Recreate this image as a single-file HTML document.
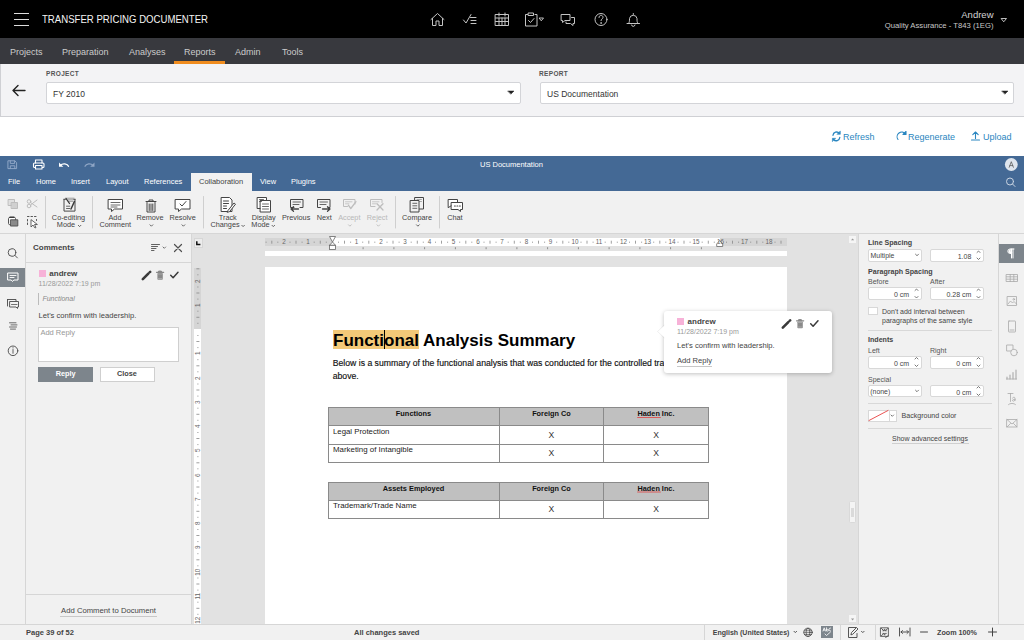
<!DOCTYPE html>
<html><head><meta charset="utf-8">
<style>
*{box-sizing:border-box;margin:0;padding:0}
html,body{width:1024px;height:640px;overflow:hidden;background:#fff;font-family:"Liberation Sans",sans-serif}
.a{position:absolute}
.t{position:absolute;white-space:nowrap;line-height:1}
svg{position:absolute;overflow:visible;z-index:5}
</style></head><body>
<!-- HEADER -->
<div class="a" style="left:0;top:0;width:1024px;height:38px;background:#000"></div>
<div class="a" style="left:14px;top:12.5px;width:15px;height:1px;background:#ddd"></div>
<div class="a" style="left:14px;top:18.5px;width:15px;height:1px;background:#ddd"></div>
<div class="a" style="left:14px;top:24.5px;width:15px;height:1px;background:#ddd"></div>
<div class="t" style="left:42px;top:14.4px;font-size:10.5px;color:#f4f4f4;transform:scaleX(0.915);transform-origin:0 0">TRANSFER PRICING DOCUMENTER</div>
<div class="t" style="right:30.5px;top:10.3px;font-size:9.5px;color:#d4d4d4">Andrew</div>
<div class="t" style="right:30.5px;top:21.8px;font-size:7.7px;color:#c8c8c8">Quality Assurance - T843 (1EG)</div>


<svg style="left:0;top:0" width="1024" height="640" viewBox="0 0 1024 640" fill="none" stroke-linecap="round" stroke-linejoin="round">
 <g stroke="#c4c4c4" stroke-width="1">
  <!-- home -->
  <path d="M431 19.5l6.5-6 6.5 6M432.5 18.5v7h3.5v-4.5h3v4.5h3.5v-7"/>
  <!-- checklist -->
  <path d="M463.5 20l2.5 3 5-8.5M470.5 17.5h5.5M471 20.5h5M471 23.5h5"/>
  <!-- calendar -->
  <rect x="495.5" y="14.5" width="13" height="11" /><path d="M495.5 18h13M499 13v3M505 13v3M499 18v7.5M502 18v7.5M505 18v7.5M495.5 21.5h13"/>
  <!-- clipboard -->
  <path d="M527.5 14.5h-2v11.5h11.5v-11.5h-2"/><rect x="528.5" y="13" width="5" height="2.5"/><path d="M528.5 20.5l2 2 3.5-4"/>
  <!-- chat -->
  <path d="M561.5 14.5h8.5v6h-5l-2.5 2v-2h-1z"/><path d="M571.5 17.5h3v6h-1.5v2l-2.5-2h-4.5v-1.5"/>
  <!-- help -->
  <circle cx="601" cy="19.5" r="6"/><path d="M599 17.5c0-1.3 1-2.2 2-2.2s2 .8 2 2c0 1.5-2 1.7-2 3.3"/><circle cx="601" cy="23" r=".3" fill="#d0d0d0"/>
  <!-- bell -->
  <path d="M627 23.5h12.5M628.5 23.5c1-1 1-2.5 1-5a3.8 3.8 0 0 1 7.5 0c0 2.5 0 4 1 5M631.5 25a1.8 1.8 0 0 0 3.5 0M633.3 13.5v1"/>
 </g>
 <path d="M539.5 18h4l-2 2.5z" stroke="#d0d0d0" stroke-width="0.9"/>
 <path d="M1001.5 18.5h5l-2.5 3z" stroke="#d0d0d0" stroke-width="0.9"/>
 <!-- back arrow -->
 <path d="M13 90.5h12M18 85.5l-5 5 5 5" stroke="#222" stroke-width="1.4"/>
 <!-- dropdown carets -->
 <path d="M508 91h6l-3 3z" fill="#222" stroke="#222" stroke-width=".5"/>
 <path d="M1002 91h6l-3 3z" fill="#222" stroke="#222" stroke-width=".5"/>
 <!-- refresh -->
 <g stroke="#2a86c0" stroke-width="1.1">
  <path d="M833 135.3a3.6 3.6 0 0 1 6.3-2M839.8 137.5a3.6 3.6 0 0 1-6.3 2" stroke-width="1.3"/><path d="M840.3 131.3v3h-3z M832.4 141.3v-3h3z" fill="#2a86c0" stroke-width="0.6"/>
  <path d="M898 139.5a4.3 4.3 0 0 1 7.5-5.5"/><path d="M906 131.5v3h-3z" fill="#2a86c0"/>
  <path d="M975.5 132v6.5M972.8 134.7l2.7-2.7 2.7 2.7M971.5 140h8"/>
 </g>
 <!-- title bar icons -->
 <g stroke="#8fa6c6" stroke-width="1">
  <path d="M8.3 160.8h6.5l1.8 1.8v6h-8.3z"/><path d="M10.3 160.8v2.6h4.3v-2.6M10.3 168.6v-2.8h4.5v2.8"/>
  <path d="M93 165.3a4.5 3.5 0 0 0-8 1" stroke-width="1.2"/><path d="M94.5 162.5v4.3h-4.3z" fill="#8fa6c6" stroke="none"/>
 </g>
 <g stroke="#fff" stroke-width="1.1">
  <path d="M35.5 163v-3h6.5v3"/><rect x="33.5" y="163" width="10.5" height="4.5" rx="1"/><path d="M35.5 165.5v3.5h6.5v-3.5z" fill="#446995"/>
  <path d="M60.5 165.3a4.5 3.5 0 0 1 8 1" stroke-width="1.3"/><path d="M59 162.5v4.3h4.3z" fill="#fff" stroke="none"/>
 </g>
 <circle cx="1011.3" cy="164.5" r="6.4" fill="#dfe5ed"/>
 <path d="M1009.2 167.3l2.1-5.6 2.1 5.6M1009.9 165.6h2.8" stroke="#555" stroke-width="0.75"/>
 <g stroke="#c9d4e2" stroke-width="1"><circle cx="1010" cy="181.5" r="3.5"/><path d="M1012.5 184l2.5 2.5"/></g>
</svg>

<!-- NAV -->
<div class="a" style="left:0;top:38px;width:1024px;height:26px;background:#38393e"></div>
<div class="t" style="left:10px;top:47.5px;font-size:9px;color:#ccc">Projects</div>
<div class="t" style="left:62px;top:47.5px;font-size:9px;color:#ccc">Preparation</div>
<div class="t" style="left:129px;top:47.5px;font-size:9px;color:#ccc">Analyses</div>
<div class="t" style="left:184px;top:47.5px;font-size:9px;color:#ccc">Reports</div>
<div class="t" style="left:235px;top:47.5px;font-size:9px;color:#ccc">Admin</div>
<div class="t" style="left:282px;top:47.5px;font-size:9px;color:#ccc">Tools</div>
<div class="a" style="left:174px;top:61px;width:51px;height:3px;background:#f08c1e"></div>

<!-- PROJECT PANEL -->
<div class="a" style="left:0;top:64px;width:1024px;height:53px;background:#f3f3f5;border-bottom:1px solid #cfd0d4;border-left:1px solid #cfd0d4"></div>
<div class="t" style="left:46px;top:70.5px;font-size:6.5px;font-weight:bold;color:#555;letter-spacing:0.35px">PROJECT</div>
<div class="a" style="left:46px;top:82px;width:475px;height:22px;background:#fff;border:1px solid #d3d4d8;border-radius:2px"></div>
<div class="t" style="left:53px;top:90px;font-size:8.5px;color:#333">FY 2010</div>
<div class="t" style="left:539px;top:70.5px;font-size:6.5px;font-weight:bold;color:#555;letter-spacing:0.35px">REPORT</div>
<div class="a" style="left:540px;top:82px;width:474px;height:22px;background:#fff;border:1px solid #d3d4d8;border-radius:2px"></div>
<div class="t" style="left:547px;top:90px;font-size:8.5px;color:#333">US Documentation</div>

<!-- ACTIONS -->
<div class="t" style="left:843px;top:132.5px;font-size:9px;color:#2a86c0">Refresh</div>
<div class="t" style="left:908px;top:132.5px;font-size:9px;color:#2a86c0">Regenerate</div>
<div class="t" style="left:983px;top:132.5px;font-size:9px;color:#2a86c0">Upload</div>

<!-- EDITOR TITLE BAR -->
<div class="a" style="left:0;top:155.5px;width:1024px;height:35.5px;background:#446995"></div>
<div class="t" style="left:480px;top:160.8px;font-size:7.5px;color:#fff">US Documentation</div>
<div class="t" style="left:8px;top:178px;font-size:7.5px;color:#fff">File</div>
<div class="t" style="left:36px;top:178px;font-size:7.5px;color:#fff">Home</div>
<div class="t" style="left:71px;top:178px;font-size:7.5px;color:#fff">Insert</div>
<div class="t" style="left:106px;top:178px;font-size:7.5px;color:#fff">Layout</div>
<div class="t" style="left:144px;top:178px;font-size:7.5px;color:#fff">References</div>
<div class="a" style="left:191px;top:173px;width:61px;height:18px;background:#f1f1f1"></div>
<div class="t" style="left:199px;top:178px;font-size:7.5px;color:#444">Collaboration</div>
<div class="t" style="left:260px;top:178px;font-size:7.5px;color:#fff">View</div>
<div class="t" style="left:291px;top:178px;font-size:7.5px;color:#fff">Plugins</div>

<!-- TOOLBAR -->
<div class="a" style="left:0;top:191px;width:1024px;height:43px;background:#f1f1f1;border-bottom:1px solid #d6d6d6"></div>


<!-- TOOLBAR ICONS -->
<svg style="left:0;top:0" width="1024" height="640" viewBox="0 0 1024 640" fill="none" stroke-linecap="round" stroke-linejoin="round">
 <g stroke="#bdbdbd" stroke-width="1">
  <rect x="8.5" y="199.5" width="6" height="6" fill="#e0e0e0"/><rect x="11.5" y="202.5" width="6" height="6" fill="#d0d0d0"/>
  <circle cx="29" cy="206" r="1.8"/><circle cx="29" cy="201.5" r="1.8"/><path d="M30.5 205 L37 200 M30.5 202.5 L37 207"/>
 </g>
 <g stroke="#444" stroke-width="1">
  <rect x="8.5" y="217.5" width="7" height="7" rx="1" fill="#fff" stroke="#555"/><rect x="10.8" y="219.8" width="7" height="6.2" fill="#8a8a8a" stroke="#555"/><path d="M10 217.2h4" stroke="#333" stroke-width="1.3"/>
  <path d="M27.5 216.5h1.5M31 216.5h1.5M34.5 216.5h1.5M27.5 219.5v1.5M27.5 223v1.5M36.5 219.5v1" stroke-width="0.9"/>
  <path d="M31 220 L31 227 L33 225 L35 228 L36 227.5 L34.5 224.5 L37 224.5 Z" fill="#fff" stroke-width="0.8"/>
 </g>
 <g stroke="#cfcfcf"><path d="M45.5 196.5V228M92.5 196.5V228M203.5 196.5V228M395.5 196.5V228M439.5 196.5V228"/></g>
 <g stroke="#444" stroke-width="1">
  <!-- co-editing -->
  <path d="M64 199.3v11.8h11v-11.8M64 199.3h1.5M73.5 199.3h1.5" stroke="#4a4a4a"/>
  <path d="M67.5 198.2h6.5M68.3 199.8h5M69 201.3h3.8" stroke="#9a9a9a" stroke-width="1"/>
  <path d="M66 198.3l3.5 5.2" stroke="#3a3a3a" stroke-width="1.3"/>
  <path d="M66.5 206.2h3.3M66.5 208.5h3.3" stroke="#555" stroke-width="0.9"/>
  <path d="M71 209l3.4-7.5" stroke="#3a3a3a" stroke-width="1.5"/>
  <!-- add comment -->
  <path d="M108.5 199.5h14v9.5h-8l-3 2.5v-2.5h-3z" fill="#fff"/><path d="M111 202.5h9M111 205h9M111 207h6" stroke-width="0.8"/>
  <!-- remove -->
  <path d="M146 201.5h10M149 201.5v-1.5h4v1.5M147 202.5v9.5h8v-9.5M149.2 204v6.5M151 204v6.5M152.8 204v6.5" />
  <!-- resolve -->
  <path d="M175.5 199.5h14.5v9.5h-8.5l-3 2.5v-2.5h-3z" fill="#fff"/><path d="M180 204l2 2 4-4.5" />
  <!-- track changes -->
  <path d="M221.5 197.5h8l2.5 2.5v11.5h-10.5z" fill="#fff"/><path d="M223.5 201h5M223.5 203.5h5M223.5 206h3M223.5 208.5h3"/>
  <path d="M228 210.5l6-7.5 1.5 1.2-6 7.5-2 .5z" fill="#fff"/>
  <!-- display mode -->
  <rect x="257.5" y="197.5" width="9" height="11" fill="#fff"/><rect x="260.5" y="200.5" width="10" height="11.5" fill="#fff"/>
  <path d="M262.5 204h6M262.5 206.5h6M262.5 209h6M259.5 199.5h4M259.5 201.5h2" stroke-width="0.8"/>
  <!-- previous -->
  <path d="M294 207.5h-3.5v-8h12.5v8h-3" /><path d="M293 202h7.5M293 204.5h6" stroke-width="0.8"/>
  <path d="M298.5 209h-7.5M293.5 206.8l-2.5 2.2 2.5 2.2" stroke-width="1.3"/>
  <!-- next -->
  <path d="M320.5 207.5h-3v-8h12.5v8h-2" /><path d="M320 202h7.5M320 204.5h6" stroke-width="0.8"/>
  <path d="M322.5 209h7.5M327.5 206.8l2.5 2.2-2.5 2.2" stroke-width="1.3"/>
  <!-- compare -->
  <rect x="415" y="197.5" width="8.5" height="11.5" fill="#f1f1f1"/><path d="M417 199.5h4.5M417 201.5h4.5" stroke-width="0.7" stroke="#888"/><rect x="410.5" y="200.5" width="8.5" height="11.5" fill="#f1f1f1"/>
  <path d="M412.8 203.3h4M412.8 205.8h4M412.8 208.3h4" stroke-width="0.8"/>
  <!-- chat -->
  <path d="M448.5 199.5h9v6h-6l-3 2z" fill="#fff"/><path d="M451.5 202.5h11v7h-2v2l-2.5-2h-6.5z" fill="#fff"/>
  <path d="M454.5 206h.8M457 206h.8M459.5 206h.8" stroke-width="1.2"/>
 </g>
 <g stroke="#bdbdbd" stroke-width="1">
  <!-- accept -->
  <path d="M347.5 206.5h-4v-7h11.5v4.5" /><path d="M345.5 201.8h6.5M345.5 203.8h3.5" stroke-width="0.8"/><path d="M348.3 205.2l2.5 3.3 5.2-6.8" stroke-width="1.3"/>
  <!-- reject -->
  <path d="M375 206.5h-4.5v-7h11.5v3" /><path d="M372.5 201.8h6.5M372.5 203.8h3.5" stroke-width="0.8"/><path d="M377 203.8l6 6.2M383 203.8l-6 6.2" stroke-width="1.3"/>
 </g>
 <g stroke="#555" stroke-width="0.9">
  <path d="M78.3 225.3l1.3 1.3 1.3-1.3M150 224.8l1.4 1.4 1.4-1.4M182 224.8l1.4 1.4 1.4-1.4M241.8 225.3l1.3 1.3 1.3-1.3M272 225.3l1.3 1.3 1.3-1.3M416.5 224.8l1.4 1.4 1.4-1.4"/>
 </g>
 <g stroke="#bbb" stroke-width="0.9"><path d="M348.5 224.8l1.4 1.4 1.4-1.4M377 224.8l1.4 1.4 1.4-1.4"/></g>
</svg>
<div class="t" style="left:28.5px;width:80px;text-align:center;top:214.12px;font-size:7.3px;color:#444">Co-editing</div>
<div class="t" style="left:26px;width:80px;text-align:center;top:220.62px;font-size:7.3px;color:#444">Mode</div>
<div class="t" style="left:75px;width:80px;text-align:center;top:214.12px;font-size:7.3px;color:#444">Add</div>
<div class="t" style="left:75.3px;width:80px;text-align:center;top:220.62px;font-size:7.3px;color:#444">Comment</div>
<div class="t" style="left:110px;width:80px;text-align:center;top:214.12px;font-size:7.3px;color:#444">Remove</div>
<div class="t" style="left:142.6px;width:80px;text-align:center;top:214.12px;font-size:7.3px;color:#444">Resolve</div>
<div class="t" style="left:187.8px;width:80px;text-align:center;top:214.12px;font-size:7.3px;color:#444">Track</div>
<div class="t" style="left:185px;width:80px;text-align:center;top:220.62px;font-size:7.3px;color:#444">Changes</div>
<div class="t" style="left:223.7px;width:80px;text-align:center;top:214.12px;font-size:7.3px;color:#444">Display</div>
<div class="t" style="left:220.5px;width:80px;text-align:center;top:220.62px;font-size:7.3px;color:#444">Mode</div>
<div class="t" style="left:256.1px;width:80px;text-align:center;top:214.12px;font-size:7.3px;color:#444">Previous</div>
<div class="t" style="left:284.3px;width:80px;text-align:center;top:214.12px;font-size:7.3px;color:#444">Next</div>
<div class="t" style="left:309.3px;width:80px;text-align:center;top:214.12px;font-size:7.3px;color:#b8b8b8">Accept</div>
<div class="t" style="left:337.2px;width:80px;text-align:center;top:214.12px;font-size:7.3px;color:#b8b8b8">Reject</div>
<div class="t" style="left:377.1px;width:80px;text-align:center;top:214.12px;font-size:7.3px;color:#444">Compare</div>
<div class="t" style="left:414.9px;width:80px;text-align:center;top:214.12px;font-size:7.3px;color:#444">Chat</div>

<!-- LEFT ICON COLUMN -->
<div class="a" style="left:0;top:234px;width:26px;height:390px;background:#f1f1f1;border-right:1px solid #d6d6d6"></div>
<div class="a" style="left:0;top:268px;width:25px;height:19px;background:#7d858c"></div>

<!-- COMMENTS PANEL -->
<div class="a" style="left:26px;top:234px;width:166px;height:390px;background:#f1f1f1;border-right:1px solid #d6d6d6"></div>
<div class="a" style="left:26px;top:262px;width:165px;height:1px;background:#d6d6d6"></div>
<div class="t" style="left:33px;top:244px;font-size:8px;font-weight:bold;color:#444">Comments</div>

<div class="a" style="left:38.5px;top:270px;width:7px;height:7px;background:#f7b2d8"></div>
<div class="t" style="left:49.3px;top:269.83px;font-size:8px;color:#444;font-weight:bold">andrew</div>
<div class="t" style="left:38.6px;top:279.87px;font-size:7px;color:#999;">11/28/2022 7:19 pm</div>
<div class="a" style="left:38px;top:293px;width:1px;height:12px;background:#bbb"></div>
<div class="t" style="left:42.4px;top:294.67px;font-size:7px;color:#888;font-style:italic">Functional</div>
<div class="t" style="left:38.6px;top:312.3px;font-size:7.6px;color:#444;">Let's confirm with leadership.</div>
<div class="a" style="left:38px;top:327px;width:140.5px;height:35px;background:#fff;border:1px solid #cfcfcf"></div>
<div class="t" style="left:40.4px;top:329.4px;font-size:7.5px;color:#999;">Add Reply</div>
<div class="a" style="left:38px;top:367px;width:55px;height:14.5px;background:#7d858c"></div>
<div class="t" style="left:-14.400000000000006px;width:160px;text-align:center;top:370px;font-size:7.3px;color:#fff;font-weight:bold">Reply</div>
<div class="a" style="left:99.5px;top:367px;width:55px;height:14.5px;background:#fff;border:1px solid #cfcfcf"></div>
<div class="t" style="left:47px;width:160px;text-align:center;top:370px;font-size:7.3px;color:#444;font-weight:bold">Close</div>
<div class="a" style="left:26px;top:594px;width:165px;height:1px;background:#d6d6d6"></div>
<div class="t" style="left:28.5px;width:160px;text-align:center;top:607px;font-size:7.7px;color:#444;">Add Comment to Document</div>
<div class="a" style="left:60px;top:616px;width:97px;height:0;border-top:1px solid #c8c8c8"></div>

<!-- DOC AREA -->
<div class="a" style="left:192px;top:234px;width:666px;height:390px;background:#e2e2e2"></div>
<div class="a" style="left:265px;top:267px;width:522px;height:357px;background:#fff"></div>

<div class="a" style="left:264.7px;top:250.9px;width:522.7px;height:5.1px;background:#fff"></div>
<div class="a" style="left:264.7px;top:238.4px;width:522.3px;height:8.1px;background:#d5d5d5"></div>
<div class="a" style="left:332px;top:238.4px;width:387.7px;height:8.1px;background:#fff"></div>
<div class="a" style="left:193.5px;top:238.3px;width:9.2px;height:9.3px;background:#ececec;border:1px solid #d6d6d6"></div>
<div class="a" style="left:194.4px;top:268px;width:7px;height:356px;background:#fff"></div>
<div class="a" style="left:194.4px;top:268px;width:7px;height:61.4px;background:#d5d5d5"></div>
<div class="a" style="left:332.5px;top:329.7px;width:86.25px;height:19.2px;background:#f3c978"></div>
<div class="t" style="left:333px;top:331.5px;font-size:17px;color:#000;font-weight:bold">Functional Analysis Summary</div>
<div class="a" style="left:383.5px;top:330px;width:1.2px;height:19px;background:#000"></div>
<div class="t" style="left:332.7px;top:359.4px;font-size:8.68px;color:#111;-webkit-text-stroke:0.15px #111">Below is a summary of the functional analysis that was conducted for the controlled transactions described</div>
<div class="t" style="left:332.7px;top:371.7px;font-size:8.68px;color:#111;-webkit-text-stroke:0.15px #111">above.</div>
<div class="a" style="left:327.8px;top:407.2px;width:380.8px;height:18.5px;background:#c0c0c0"></div>
<div class="a" style="left:327.8px;top:407.2px;width:381px;height:56.1px;border:1px solid #8a8a8a"></div>
<div class="a" style="left:499px;top:407.2px;width:1px;height:56.1px;background:#8a8a8a"></div>
<div class="a" style="left:603px;top:407.2px;width:1px;height:56.1px;background:#8a8a8a"></div>
<div class="a" style="left:327.8px;top:425.2px;width:381px;height:1px;background:#8a8a8a"></div>
<div class="a" style="left:327.8px;top:444.0px;width:381px;height:1px;background:#8a8a8a"></div>
<div class="a" style="left:327.8px;top:482px;width:380.8px;height:18.5px;background:#c0c0c0"></div>
<div class="a" style="left:327.8px;top:482px;width:381px;height:36.5px;border:1px solid #8a8a8a"></div>
<div class="a" style="left:499px;top:482px;width:1px;height:36.5px;background:#8a8a8a"></div>
<div class="a" style="left:603px;top:482px;width:1px;height:36.5px;background:#8a8a8a"></div>
<div class="a" style="left:327.8px;top:500.0px;width:381px;height:1px;background:#8a8a8a"></div>
<div class="t" style="left:333.5px;width:160px;text-align:center;top:409.64px;font-size:7.4px;color:#111;font-weight:bold">Functions</div>
<div class="t" style="left:471.4px;width:160px;text-align:center;top:409.72px;font-size:7.3px;color:#111;font-weight:bold">Foreign Co</div>
<div class="t" style="left:576.0px;width:160px;text-align:center;top:409.72px;font-size:7.3px;color:#111;font-weight:bold">Haden Inc.</div>
<div class="t" style="left:333.5px;width:160px;text-align:center;top:484.64px;font-size:7.4px;color:#111;font-weight:bold">Assets Employed</div>
<div class="t" style="left:471.4px;width:160px;text-align:center;top:484.72px;font-size:7.3px;color:#111;font-weight:bold">Foreign Co</div>
<div class="t" style="left:576.0px;width:160px;text-align:center;top:484.72px;font-size:7.3px;color:#111;font-weight:bold">Haden Inc.</div>
<svg style="left:0;top:0" width="1024" height="640" viewBox="0 0 1024 640" fill="none"><path d="M637.2 417.5h23.6M637.2 492h23.6" stroke="#e04040" stroke-width="0.8"/></svg>
<div class="t" style="left:333px;top:427.60px;font-size:7.8px;color:#222;">Legal Protection</div>
<div class="t" style="left:333px;top:446.01px;font-size:7.9px;color:#222;">Marketing of Intangible</div>
<div class="t" style="left:333px;top:502.31px;font-size:7.9px;color:#222;">Trademark/Trade Name</div>
<div class="t" style="left:531.4px;width:40px;text-align:center;top:430.58px;font-size:8.6px;color:#333;">X</div>
<div class="t" style="left:636.0px;width:40px;text-align:center;top:430.58px;font-size:8.6px;color:#333;">X</div>
<div class="t" style="left:531.4px;width:40px;text-align:center;top:448.98px;font-size:8.6px;color:#333;">X</div>
<div class="t" style="left:636.0px;width:40px;text-align:center;top:448.98px;font-size:8.6px;color:#333;">X</div>
<div class="t" style="left:531.4px;width:40px;text-align:center;top:505.18px;font-size:8.6px;color:#333;">X</div>
<div class="t" style="left:636.0px;width:40px;text-align:center;top:505.18px;font-size:8.6px;color:#333;">X</div>
<div class="a" style="left:849px;top:235.8px;width:7.3px;height:7px;background:#f5f5f5"></div>
<div class="a" style="left:849px;top:615.3px;width:7px;height:7.2px;background:#f5f5f5"></div><svg style="left:0;top:0" width="1024" height="640"><path d="M851 618.6h3.2l-1.6 1.8z M851 240.3h3.2l-1.6-1.8z" fill="#999"/></svg>
<div class="a" style="left:848.5px;top:501.3px;width:7.8px;height:21.5px;background:#f4f4f4;border:1px solid #d9d9d9;border-radius:1.5px"></div><div class="a" style="left:851.3px;top:508.1px;width:2.6px;height:8.8px;background:#dadada"></div>
<div class="a" style="left:664px;top:311px;width:168px;height:62px;background:#fff;border-radius:3px;box-shadow:0 1px 4px rgba(0,0,0,0.25)"></div>
<svg style="left:0;top:0" width="1024" height="640" viewBox="0 0 1024 640"><path d="M665 325 L657.5 331.5 L665 338 Z" fill="#fff"/><path d="M664.5 325 L657.5 331.5 L664.5 338" fill="none" stroke="rgba(0,0,0,0.08)" stroke-width="0.8"/></svg>
<div class="a" style="left:677px;top:317.6px;width:7px;height:7px;background:#f7b2d8;z-index:6"></div>
<div class="t" style="left:687.6px;top:317.73px;font-size:8px;color:#444;z-index:6;font-weight:bold">andrew</div>
<div class="t" style="left:677px;top:328.07px;font-size:7px;color:#999;z-index:6;">11/28/2022 7:19 pm</div>
<div class="t" style="left:677px;top:342.2px;font-size:7.6px;color:#444;z-index:6;">Let's confirm with leadership.</div>
<div class="t" style="left:677px;top:356.57px;font-size:7.6px;color:#444;z-index:6;">Add Reply</div>
<div class="a" style="left:676.5px;top:365.5px;width:35.5px;height:0;border-top:1px solid #c8c8c8;z-index:6"></div>

<svg style="left:0;top:0" width="1024" height="640" viewBox="0 0 1024 640" fill="none">
<path d="M271.8 240.7v3" stroke="#888" stroke-width="0.8"/>
<path d="M277.8 241.7v1" stroke="#888" stroke-width="0.9"/>
<path d="M290.0 241.7v1" stroke="#888" stroke-width="0.9"/>
<path d="M296.0 240.7v3" stroke="#888" stroke-width="0.8"/>
<path d="M302.1 241.7v1" stroke="#888" stroke-width="0.9"/>
<path d="M314.2 241.7v1" stroke="#888" stroke-width="0.9"/>
<path d="M320.3 240.7v3" stroke="#888" stroke-width="0.8"/>
<path d="M326.3 241.7v1" stroke="#888" stroke-width="0.9"/>
<path d="M338.5 241.7v1" stroke="#888" stroke-width="0.9"/>
<path d="M344.5 240.7v3" stroke="#888" stroke-width="0.8"/>
<path d="M350.6 241.7v1" stroke="#888" stroke-width="0.9"/>
<path d="M362.7 241.7v1" stroke="#888" stroke-width="0.9"/>
<path d="M368.8 240.7v3" stroke="#888" stroke-width="0.8"/>
<path d="M374.8 241.7v1" stroke="#888" stroke-width="0.9"/>
<path d="M387.0 241.7v1" stroke="#888" stroke-width="0.9"/>
<path d="M393.0 240.7v3" stroke="#888" stroke-width="0.8"/>
<path d="M399.1 241.7v1" stroke="#888" stroke-width="0.9"/>
<path d="M411.2 241.7v1" stroke="#888" stroke-width="0.9"/>
<path d="M417.3 240.7v3" stroke="#888" stroke-width="0.8"/>
<path d="M423.3 241.7v1" stroke="#888" stroke-width="0.9"/>
<path d="M435.5 241.7v1" stroke="#888" stroke-width="0.9"/>
<path d="M441.5 240.7v3" stroke="#888" stroke-width="0.8"/>
<path d="M447.6 241.7v1" stroke="#888" stroke-width="0.9"/>
<path d="M459.7 241.7v1" stroke="#888" stroke-width="0.9"/>
<path d="M465.8 240.7v3" stroke="#888" stroke-width="0.8"/>
<path d="M471.8 241.7v1" stroke="#888" stroke-width="0.9"/>
<path d="M484.0 241.7v1" stroke="#888" stroke-width="0.9"/>
<path d="M490.0 240.7v3" stroke="#888" stroke-width="0.8"/>
<path d="M496.1 241.7v1" stroke="#888" stroke-width="0.9"/>
<path d="M508.2 241.7v1" stroke="#888" stroke-width="0.9"/>
<path d="M514.3 240.7v3" stroke="#888" stroke-width="0.8"/>
<path d="M520.3 241.7v1" stroke="#888" stroke-width="0.9"/>
<path d="M532.5 241.7v1" stroke="#888" stroke-width="0.9"/>
<path d="M538.5 240.7v3" stroke="#888" stroke-width="0.8"/>
<path d="M544.6 241.7v1" stroke="#888" stroke-width="0.9"/>
<path d="M556.7 241.7v1" stroke="#888" stroke-width="0.9"/>
<path d="M562.8 240.7v3" stroke="#888" stroke-width="0.8"/>
<path d="M568.8 241.7v1" stroke="#888" stroke-width="0.9"/>
<path d="M581.0 241.7v1" stroke="#888" stroke-width="0.9"/>
<path d="M587.0 240.7v3" stroke="#888" stroke-width="0.8"/>
<path d="M593.1 241.7v1" stroke="#888" stroke-width="0.9"/>
<path d="M605.2 241.7v1" stroke="#888" stroke-width="0.9"/>
<path d="M611.3 240.7v3" stroke="#888" stroke-width="0.8"/>
<path d="M617.3 241.7v1" stroke="#888" stroke-width="0.9"/>
<path d="M629.5 241.7v1" stroke="#888" stroke-width="0.9"/>
<path d="M635.5 240.7v3" stroke="#888" stroke-width="0.8"/>
<path d="M641.6 241.7v1" stroke="#888" stroke-width="0.9"/>
<path d="M653.7 241.7v1" stroke="#888" stroke-width="0.9"/>
<path d="M659.8 240.7v3" stroke="#888" stroke-width="0.8"/>
<path d="M665.8 241.7v1" stroke="#888" stroke-width="0.9"/>
<path d="M678.0 241.7v1" stroke="#888" stroke-width="0.9"/>
<path d="M684.0 240.7v3" stroke="#888" stroke-width="0.8"/>
<path d="M690.1 241.7v1" stroke="#888" stroke-width="0.9"/>
<path d="M702.2 241.7v1" stroke="#888" stroke-width="0.9"/>
<path d="M708.3 240.7v3" stroke="#888" stroke-width="0.8"/>
<path d="M714.3 241.7v1" stroke="#888" stroke-width="0.9"/>
<path d="M726.5 241.7v1" stroke="#888" stroke-width="0.9"/>
<path d="M732.5 240.7v3" stroke="#888" stroke-width="0.8"/>
<path d="M738.6 241.7v1" stroke="#888" stroke-width="0.9"/>
<path d="M750.7 241.7v1" stroke="#888" stroke-width="0.9"/>
<path d="M756.8 240.7v3" stroke="#888" stroke-width="0.8"/>
<path d="M762.8 241.7v1" stroke="#888" stroke-width="0.9"/>
<path d="M775.0 241.7v1" stroke="#888" stroke-width="0.9"/>
<path d="M781.0 240.7v3" stroke="#888" stroke-width="0.8"/>
<path d="M363.1 247.2v2" stroke="#777" stroke-width="0.8"/>
<path d="M393.9 247.2v2" stroke="#777" stroke-width="0.8"/>
<path d="M424.6 247.2v2" stroke="#777" stroke-width="0.8"/>
<path d="M455.4 247.2v2" stroke="#777" stroke-width="0.8"/>
<path d="M486.1 247.2v2" stroke="#777" stroke-width="0.8"/>
<path d="M516.9 247.2v2" stroke="#777" stroke-width="0.8"/>
<path d="M547.6 247.2v2" stroke="#777" stroke-width="0.8"/>
<path d="M578.4 247.2v2" stroke="#777" stroke-width="0.8"/>
<path d="M609.1 247.2v2" stroke="#777" stroke-width="0.8"/>
<path d="M639.9 247.2v2" stroke="#777" stroke-width="0.8"/>
<path d="M670.6 247.2v2" stroke="#777" stroke-width="0.8"/>
<path d="M701.4 247.2v2" stroke="#777" stroke-width="0.8"/>
<path d="M329.5 236.5h6l-3 5.5z M332.5 242l3 3.3h-6z" fill="#fff" stroke="#666" stroke-width="0.8"/><rect x="329.5" y="245.3" width="6" height="4.2" fill="#fff" stroke="#666" stroke-width="0.8"/>
<path d="M719.7 240.5l3 3.5v2.5h-6v-2.5z" fill="#fff" stroke="#666" stroke-width="0.8"/>
<path d="M197.4 274.8h1" stroke="#888" stroke-width="0.9"/>
<path d="M197.4 287.0h1" stroke="#888" stroke-width="0.9"/>
<path d="M196.4 293.0h3" stroke="#888" stroke-width="0.8"/>
<path d="M197.4 299.1h1" stroke="#888" stroke-width="0.9"/>
<path d="M197.4 311.2h1" stroke="#888" stroke-width="0.9"/>
<path d="M196.4 317.3h3" stroke="#888" stroke-width="0.8"/>
<path d="M197.4 323.3h1" stroke="#888" stroke-width="0.9"/>
<path d="M197.4 335.5h1" stroke="#888" stroke-width="0.9"/>
<path d="M196.4 341.5h3" stroke="#888" stroke-width="0.8"/>
<path d="M197.4 347.6h1" stroke="#888" stroke-width="0.9"/>
<path d="M197.4 359.7h1" stroke="#888" stroke-width="0.9"/>
<path d="M196.4 365.8h3" stroke="#888" stroke-width="0.8"/>
<path d="M197.4 371.8h1" stroke="#888" stroke-width="0.9"/>
<path d="M197.4 384.0h1" stroke="#888" stroke-width="0.9"/>
<path d="M196.4 390.0h3" stroke="#888" stroke-width="0.8"/>
<path d="M197.4 396.1h1" stroke="#888" stroke-width="0.9"/>
<path d="M197.4 408.2h1" stroke="#888" stroke-width="0.9"/>
<path d="M196.4 414.3h3" stroke="#888" stroke-width="0.8"/>
<path d="M197.4 420.3h1" stroke="#888" stroke-width="0.9"/>
<path d="M197.4 432.5h1" stroke="#888" stroke-width="0.9"/>
<path d="M196.4 438.5h3" stroke="#888" stroke-width="0.8"/>
<path d="M197.4 444.6h1" stroke="#888" stroke-width="0.9"/>
<path d="M197.4 456.7h1" stroke="#888" stroke-width="0.9"/>
<path d="M196.4 462.8h3" stroke="#888" stroke-width="0.8"/>
<path d="M197.4 468.8h1" stroke="#888" stroke-width="0.9"/>
<path d="M197.4 481.0h1" stroke="#888" stroke-width="0.9"/>
<path d="M196.4 487.0h3" stroke="#888" stroke-width="0.8"/>
<path d="M197.4 493.1h1" stroke="#888" stroke-width="0.9"/>
<path d="M197.4 505.2h1" stroke="#888" stroke-width="0.9"/>
<path d="M196.4 511.3h3" stroke="#888" stroke-width="0.8"/>
<path d="M197.4 517.3h1" stroke="#888" stroke-width="0.9"/>
<path d="M197.4 529.5h1" stroke="#888" stroke-width="0.9"/>
<path d="M196.4 535.5h3" stroke="#888" stroke-width="0.8"/>
<path d="M197.4 541.6h1" stroke="#888" stroke-width="0.9"/>
<path d="M197.4 553.7h1" stroke="#888" stroke-width="0.9"/>
<path d="M196.4 559.8h3" stroke="#888" stroke-width="0.8"/>
<path d="M197.4 565.8h1" stroke="#888" stroke-width="0.9"/>
<path d="M197.4 578.0h1" stroke="#888" stroke-width="0.9"/>
<path d="M196.4 584.0h3" stroke="#888" stroke-width="0.8"/>
<path d="M197.4 590.1h1" stroke="#888" stroke-width="0.9"/>
<path d="M197.4 602.2h1" stroke="#888" stroke-width="0.9"/>
<path d="M196.4 608.3h3" stroke="#888" stroke-width="0.8"/>
<path d="M197.4 614.3h1" stroke="#888" stroke-width="0.9"/>
<path d="M196.8 241.2v3.4h3.6" stroke="#111" stroke-width="1.5" stroke-linecap="butt"/>
</svg>
<div class="t" style="left:273.9px;width:20px;text-align:center;top:238.6px;font-size:6.3px;color:#666;z-index:5">2</div>
<div class="t" style="left:298.1px;width:20px;text-align:center;top:238.6px;font-size:6.3px;color:#666;z-index:5">1</div>
<div class="t" style="left:346.6px;width:20px;text-align:center;top:238.6px;font-size:6.3px;color:#666;z-index:5">1</div>
<div class="t" style="left:370.9px;width:20px;text-align:center;top:238.6px;font-size:6.3px;color:#666;z-index:5">2</div>
<div class="t" style="left:395.1px;width:20px;text-align:center;top:238.6px;font-size:6.3px;color:#666;z-index:5">3</div>
<div class="t" style="left:419.4px;width:20px;text-align:center;top:238.6px;font-size:6.3px;color:#666;z-index:5">4</div>
<div class="t" style="left:443.6px;width:20px;text-align:center;top:238.6px;font-size:6.3px;color:#666;z-index:5">5</div>
<div class="t" style="left:467.9px;width:20px;text-align:center;top:238.6px;font-size:6.3px;color:#666;z-index:5">6</div>
<div class="t" style="left:492.1px;width:20px;text-align:center;top:238.6px;font-size:6.3px;color:#666;z-index:5">7</div>
<div class="t" style="left:516.4px;width:20px;text-align:center;top:238.6px;font-size:6.3px;color:#666;z-index:5">8</div>
<div class="t" style="left:540.6px;width:20px;text-align:center;top:238.6px;font-size:6.3px;color:#666;z-index:5">9</div>
<div class="t" style="left:564.9px;width:20px;text-align:center;top:238.6px;font-size:6.3px;color:#666;z-index:5">10</div>
<div class="t" style="left:589.1px;width:20px;text-align:center;top:238.6px;font-size:6.3px;color:#666;z-index:5">11</div>
<div class="t" style="left:613.4px;width:20px;text-align:center;top:238.6px;font-size:6.3px;color:#666;z-index:5">12</div>
<div class="t" style="left:637.6px;width:20px;text-align:center;top:238.6px;font-size:6.3px;color:#666;z-index:5">13</div>
<div class="t" style="left:661.9px;width:20px;text-align:center;top:238.6px;font-size:6.3px;color:#666;z-index:5">14</div>
<div class="t" style="left:686.1px;width:20px;text-align:center;top:238.6px;font-size:6.3px;color:#666;z-index:5">15</div>
<div class="t" style="left:710.4px;width:20px;text-align:center;top:238.6px;font-size:6.3px;color:#666;z-index:5">16</div>
<div class="t" style="left:734.6px;width:20px;text-align:center;top:238.6px;font-size:6.3px;color:#666;z-index:5">17</div>
<div class="t" style="left:758.9px;width:20px;text-align:center;top:238.6px;font-size:6.3px;color:#666;z-index:5">18</div>
<div class="t" style="left:187.9px;width:20px;text-align:center;top:277.7px;font-size:6.3px;color:#666;z-index:5;transform:rotate(-90deg)">2</div>
<div class="t" style="left:187.9px;width:20px;text-align:center;top:301.9px;font-size:6.3px;color:#666;z-index:5;transform:rotate(-90deg)">1</div>
<div class="t" style="left:187.9px;width:20px;text-align:center;top:350.4px;font-size:6.3px;color:#666;z-index:5;transform:rotate(-90deg)">1</div>
<div class="t" style="left:187.9px;width:20px;text-align:center;top:374.7px;font-size:6.3px;color:#666;z-index:5;transform:rotate(-90deg)">2</div>
<div class="t" style="left:187.9px;width:20px;text-align:center;top:398.9px;font-size:6.3px;color:#666;z-index:5;transform:rotate(-90deg)">3</div>
<div class="t" style="left:187.9px;width:20px;text-align:center;top:423.2px;font-size:6.3px;color:#666;z-index:5;transform:rotate(-90deg)">4</div>
<div class="t" style="left:187.9px;width:20px;text-align:center;top:447.4px;font-size:6.3px;color:#666;z-index:5;transform:rotate(-90deg)">5</div>
<div class="t" style="left:187.9px;width:20px;text-align:center;top:471.7px;font-size:6.3px;color:#666;z-index:5;transform:rotate(-90deg)">6</div>
<div class="t" style="left:187.9px;width:20px;text-align:center;top:495.9px;font-size:6.3px;color:#666;z-index:5;transform:rotate(-90deg)">7</div>
<div class="t" style="left:187.9px;width:20px;text-align:center;top:520.2px;font-size:6.3px;color:#666;z-index:5;transform:rotate(-90deg)">8</div>
<div class="t" style="left:187.9px;width:20px;text-align:center;top:544.4px;font-size:6.3px;color:#666;z-index:5;transform:rotate(-90deg)">9</div>
<div class="t" style="left:187.9px;width:20px;text-align:center;top:568.7px;font-size:6.3px;color:#666;z-index:5;transform:rotate(-90deg)">10</div>
<div class="t" style="left:187.9px;width:20px;text-align:center;top:592.9px;font-size:6.3px;color:#666;z-index:5;transform:rotate(-90deg)">11</div>
<div class="t" style="left:187.9px;width:20px;text-align:center;top:617.2px;font-size:6.3px;color:#666;z-index:5;transform:rotate(-90deg)">12</div>
<svg style="left:0;top:0;z-index:7" width="1024" height="640" viewBox="0 0 1024 640" fill="none" stroke-linecap="round" stroke-linejoin="round"><g transform="translate(640,48.5)">
 <g fill="#333">
  <path d="M142.8 279.2L148.3 273.7M149.8 272.2l.4-.4" stroke="#3a3a3a" stroke-width="2.6" stroke-linecap="round"/>
  <path d="M156.5 272.3h7.2M158.3 272c.3-1.2 3-1.2 3.4 0" stroke="#888" stroke-width="1.2" fill="#888"/><rect x="157.4" y="273" width="5.4" height="6.8" rx=".8" fill="#8a8a8a"/><path d="M158.2 274h3.8M158.2 278.5h3.8" stroke="#bbb" stroke-width=".6"/>
 </g>
 <path d="M170.7 275.3l2.4 2.4 4.9-5.4" stroke="#3a3a3a" stroke-width="1.5"/>
</g></svg>

<svg style="left:0;top:0" width="1024" height="640"><path d="M196.4 268.8h3" stroke="#888" stroke-width="0.8"/><path d="M266.1 241.7v1" stroke="#888" stroke-width="0.9"/></svg>
<!-- RIGHT PANEL -->
<div class="a" style="left:858px;top:234px;width:141px;height:390px;background:#f1f1f1;border-left:1px solid #d6d6d6;border-right:1px solid #d6d6d6"></div>
<div class="a" style="left:999px;top:234px;width:25px;height:390px;background:#f1f1f1"></div>
<div class="a" style="left:999px;top:244px;width:25px;height:19px;background:#7d858c"></div>


<svg style="left:0;top:0" width="1024" height="640" viewBox="0 0 1024 640" fill="none" stroke-linecap="round" stroke-linejoin="round">
 <g stroke="#505050" stroke-width="0.95">
  <circle cx="12" cy="252.5" r="3.8"/><path d="M14.8 255.3l2.6 2.6"/>
  <path d="M151.5 244.5h8M151.5 246.5h6M151.5 248.5h4.5M151.5 250.5h2.5" stroke-width="0.9"/>
  <path d="M163 247l1.3 1.3 1.3-1.3" stroke-width="0.8"/>
  <path d="M174.5 244.5l7 7M181.5 244.5l-7 7" stroke-width="1.2"/>
  <path d="M7.5 299.5h8.5v1.5M7.5 299.5v6.5M10 301.5h8.5v5.5h-1v1.5l-1.5-1.5h-6z" fill="#f1f1f1"/><path d="M11.5 304.5h5.5" stroke-width="0.8"/>
  <path d="M9.5 322.8h6.5M11 324.9h6M9.5 327h7M10.5 329.1h5" stroke-width="0.85"/>
  <circle cx="13" cy="350.8" r="4.8"/><path d="M13 349.5v3.8M13 347.7v.3" stroke-width="0.9"/>
 </g>
 <g stroke="#fff" stroke-width="1">
  <path d="M8 273h10v7h-4.2l-1.3 1.5-1.3-1.5h-3.2z"/><path d="M10 275.5h6M10 277.5h4" stroke-width="0.9"/>
 </g>
 <!-- pencil trash check -->
 <g fill="#333">
  <path d="M142.8 279.2L148.3 273.7M149.8 272.2l.4-.4" stroke="#3a3a3a" stroke-width="2.6" stroke-linecap="round"/>
  <path d="M156.5 272.3h7.2M158.3 272c.3-1.2 3-1.2 3.4 0" stroke="#888" stroke-width="1.2" fill="#888"/><rect x="157.4" y="273" width="5.4" height="6.8" rx=".8" fill="#8a8a8a"/><path d="M158.2 274h3.8M158.2 278.5h3.8" stroke="#bbb" stroke-width=".6"/>
 </g>
 <path d="M170.7 275.3l2.4 2.4 4.9-5.4" stroke="#3a3a3a" stroke-width="1.5"/>
</svg>

<!-- STATUS BAR -->

<div class="a" style="left:0;top:624px;width:1024px;height:16px;background:#f1f1f1;border-top:1px solid #d6d6d6"></div>
<div class="t" style="left:26px;top:629px;font-size:7.5px;font-weight:bold;color:#444">Page 39 of 52</div>
<div class="t" style="left:354px;top:629px;font-size:7.5px;font-weight:bold;color:#444">All changes saved</div>

<div class="t" style="left:868px;top:240.39px;font-size:7.1px;color:#444;font-weight:bold">Line Spacing</div>
<div class="a" style="left:868px;top:248.8px;width:53.700000000000045px;height:13.0px;background:#fff;border:1px solid #d8d8d8;border-radius:2px"></div>
<div class="t" style="left:870.6px;top:252.76px;font-size:6.9px;color:#444;">Multiple</div>
<div class="a" style="left:930.3px;top:248.8px;width:53.90000000000009px;height:13.0px;background:#fff;border:1px solid #d8d8d8;border-radius:2px"></div>
<div class="t" style="right:52.700000000000045px;top:252.67px;font-size:7px;color:#444;">1.08</div>
<div class="t" style="left:868px;top:269.29px;font-size:7.1px;color:#444;font-weight:bold">Paragraph Spacing</div>
<div class="t" style="left:868px;top:278.47px;font-size:7px;color:#555;">Before</div>
<div class="t" style="left:930px;top:278.47px;font-size:7px;color:#555;">After</div>
<div class="a" style="left:868px;top:286.8px;width:53.700000000000045px;height:13.599999999999966px;background:#fff;border:1px solid #d8d8d8;border-radius:2px"></div>
<div class="t" style="right:114.79999999999995px;top:290.97px;font-size:7px;color:#444;">0 cm</div>
<div class="a" style="left:930.3px;top:286.8px;width:53.90000000000009px;height:13.599999999999966px;background:#fff;border:1px solid #d8d8d8;border-radius:2px"></div>
<div class="t" style="right:52.700000000000045px;top:290.97px;font-size:7px;color:#444;">0.28 cm</div>
<div class="a" style="left:868px;top:306.6px;width:9.5px;height:8px;background:#fff;border:1px solid #d8d8d8"></div>
<div class="t" style="left:882px;top:308.07px;font-size:7px;color:#444;">Don't add interval between</div>
<div class="t" style="left:882px;top:317.47px;font-size:7px;color:#444;">paragraphs of the same style</div>
<div class="a" style="left:868px;top:330px;width:124px;height:1px;background:#d8d8d8"></div>
<div class="t" style="left:868px;top:337.39px;font-size:7.1px;color:#444;font-weight:bold">Indents</div>
<div class="t" style="left:868px;top:346.87px;font-size:7px;color:#555;">Left</div>
<div class="t" style="left:930px;top:346.87px;font-size:7px;color:#555;">Right</div>
<div class="a" style="left:868px;top:355.7px;width:54px;height:13.100000000000023px;background:#fff;border:1px solid #d8d8d8;border-radius:2px"></div>
<div class="t" style="right:114.79999999999995px;top:359.77px;font-size:7px;color:#444;">0 cm</div>
<div class="a" style="left:930.3px;top:355.7px;width:53.90000000000009px;height:13.100000000000023px;background:#fff;border:1px solid #d8d8d8;border-radius:2px"></div>
<div class="t" style="right:52.700000000000045px;top:359.77px;font-size:7px;color:#444;">0 cm</div>
<div class="t" style="left:868px;top:376.27px;font-size:7px;color:#555;">Special</div>
<div class="a" style="left:868px;top:384.7px;width:54px;height:12.800000000000011px;background:#fff;border:1px solid #d8d8d8;border-radius:2px"></div>
<div class="t" style="left:870.3px;top:388.66px;font-size:6.9px;color:#444;">(none)</div>
<div class="a" style="left:930.3px;top:384.7px;width:53.90000000000009px;height:12.800000000000011px;background:#fff;border:1px solid #d8d8d8;border-radius:2px"></div>
<div class="t" style="right:52.700000000000045px;top:388.57px;font-size:7px;color:#444;">0 cm</div>
<div class="a" style="left:868px;top:403px;width:124px;height:1px;background:#d8d8d8"></div>
<div class="a" style="left:868px;top:409.6px;width:28.5px;height:12.2px;background:#fff;border:1px solid #d8d8d8"></div>
<div class="a" style="left:888.5px;top:409.6px;width:1px;height:12.2px;background:#d8d8d8"></div>
<div class="t" style="left:901.5px;top:412.42px;font-size:7.07px;color:#444;">Background color</div>
<div class="a" style="left:868px;top:428px;width:124px;height:1px;background:#d8d8d8"></div>
<div class="t" style="left:850.0px;width:160px;text-align:center;top:434.67px;font-size:7px;color:#444;">Show advanced settings</div>
<div class="a" style="left:891.5px;top:443px;width:77px;height:0;border-top:1px solid #cfcfcf"></div>
<svg style="left:0;top:0" width="1024" height="640" viewBox="0 0 1024 640" fill="none" stroke-linecap="round" stroke-linejoin="round">
 <g stroke="#555" stroke-width="0.8">
  <path d="M915.5 254.2l1.5 1.5 1.5-1.5M915.5 390.2l1.5 1.5 1.5-1.5M891 415l1.3 1.3 1.3-1.3"/>
  <path d="M977 252.5l1.5-1.5 1.5 1.5M977 258l1.5 1.5 1.5-1.5"/>
  <path d="M915 290.5l1.5-1.5 1.5 1.5M915 296.5l1.5 1.5 1.5-1.5"/>
  <path d="M977 290.5l1.5-1.5 1.5 1.5M977 296.5l1.5 1.5 1.5-1.5"/>
  <path d="M915 359l1.5-1.5 1.5 1.5M915 365l1.5 1.5 1.5-1.5"/>
  <path d="M977 359l1.5-1.5 1.5 1.5M977 365l1.5 1.5 1.5-1.5"/>
  <path d="M977 388l1.5-1.5 1.5 1.5M977 394l1.5 1.5 1.5-1.5"/>
 </g>
 <path d="M869 420.5l19-10" stroke="#e84040" stroke-width="0.9"/>
 <!-- right column icons -->
 <g stroke="#fff" stroke-width="1"><path d="M1011.5 249v9M1013 249v9M1014 249h-4a2.2 2.2 0 0 0 0 4.4h1.5" /><path d="M1010 249.5a2 2 0 0 0 0 3.5h1.5z" fill="#fff"/></g>
 <g stroke="#aaa" stroke-width="0.8" transform="translate(1,0)">
  <rect x="1005.5" y="274.5" width="11" height="7"/><path d="M1005.5 276.8h11M1005.5 279.2h11M1009.2 274.5v7M1012.8 274.5v7"/>
  <rect x="1006.5" y="296.5" width="9" height="9"/><path d="M1007 304l2.5-3 2 2 1.5-1.5 2.5 2.5"/><circle cx="1012.8" cy="299.3" r=".8"/>
  <rect x="1007.5" y="321" width="7" height="11" rx=".5"/><path d="M1009 330h4"/>
  <rect x="1006" y="345" width="6" height="6"/><circle cx="1013" cy="352.5" r="3.3" fill="#f1f1f1"/>
  <path d="M1006 379v-2M1009 379v-4M1012 379v-6.5M1015 379v-9" stroke-width="1.1"/><path d="M1005.5 379h10"/>
  <path d="M1007 393.5h5M1009.5 393.5v8M1011.5 398c0-1 2.5-1 2.5 0v2.5M1014 399.5c-1-.3-2.5 0-2.5 1s2 1 2.5-.5M1007.5 404.5c1.5-1.5 5.5-1.5 7 0"/>
  <rect x="1006" y="419.5" width="10" height="7.5"/><path d="M1006 419.5l5 4.5 5-4.5M1006 427l3.5-3.5M1016 427l-3.5-3.5"/>
 </g>
</svg>
<div class="t" style="left:712.8px;top:628.87px;font-size:7px;color:#444;font-weight:bold">English (United States)</div>
<div class="t" style="left:937px;top:628.71px;font-size:7.2px;color:#444;font-weight:bold">Zoom 100%</div>
<div class="a" style="left:821.3px;top:626px;width:12px;height:12px;background:#7d858c"></div>
<div class="a" style="left:704.2px;top:625px;width:1px;height:15px;background:#d6d6d6"></div>
<div class="a" style="left:839.5px;top:625px;width:1px;height:15px;background:#d6d6d6"></div>
<div class="a" style="left:875.2px;top:625px;width:1px;height:15px;background:#d6d6d6"></div>
<svg style="left:0;top:0" width="1024" height="640" viewBox="0 0 1024 640" fill="none" stroke-linecap="round" stroke-linejoin="round">
 <g stroke="#444" stroke-width="0.9">
  <path d="M794 631.3l1.3 1.3 1.3-1.3M861.5 631.3l1.3 1.3 1.3-1.3"/>
  <circle cx="808" cy="632.3" r="4.2" stroke-width="0.8"/><path d="M803.8 632.3h8.4M804.5 630.2h7M804.5 634.4h7" stroke-width="0.7"/><ellipse cx="808" cy="632.3" rx="1.9" ry="4.2" stroke-width="0.7"/>
  <path d="M856 627.5h-7.5v10h8.5v-4"/><path d="M851 634.5l.5-2 5-5 1.5 1.5-5 5z"/>
  <rect x="880.8" y="627.8" width="7.6" height="8.6" stroke-width="0.8"/><path d="M881.5 628.5l2 2M887.7 628.5l-2 2M881.5 635.7l2-2M887.7 635.7l-2 2" stroke-width="0.9"/><path d="M882.8 630.8h1.5v-1.5M886.4 630.8h-1.5v-1.5M882.8 633.4h1.5v1.5M886.4 633.4h-1.5v1.5" stroke-width="0.7"/>
  <path d="M899.5 628v8M910 628v8M901 632h7.5M902.5 630.5l-1.5 1.5 1.5 1.5M907 630.5l1.5 1.5-1.5 1.5"/>
  <path d="M920.5 632h7M988.5 632h8M992.5 628v8" stroke-width="1"/>
 </g>
 <g stroke="#fff" stroke-width="0.8"><path d="M823 631l1.2-3.2 1.2 3.2M823.4 630h1.6M826.5 627.8v3.2h1.2a.8.8 0 0 0 0-1.6h-1.2M830.5 628a1.5 1.5 0 1 0 0 3"/><path d="M825 634l1.5 1.5 4-3.5"/></g>
</svg>
</body></html>
